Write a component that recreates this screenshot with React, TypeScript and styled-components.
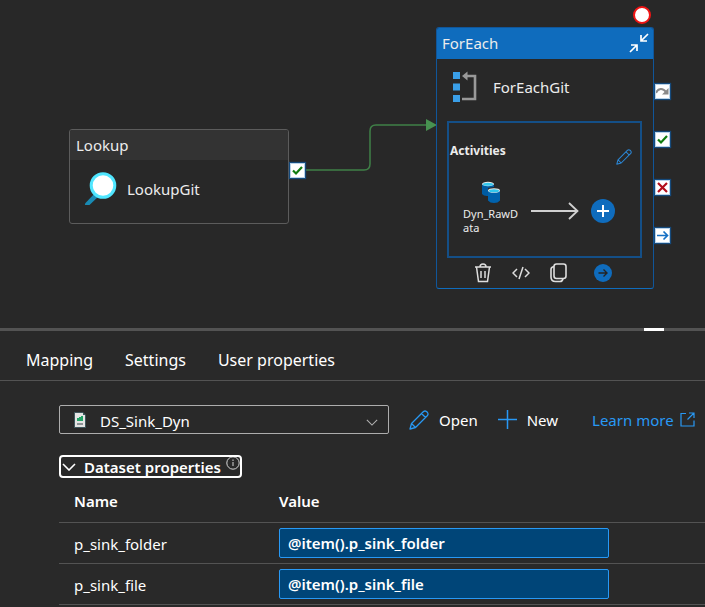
import React from "react";
import styled, { createGlobalStyle } from "styled-components";

const GlobalStyle = createGlobalStyle`
  *, *::before, *::after { box-sizing: border-box; }
  body {
    margin: 0;
    background: #292929;
    color: #ffffff;
    font-family: "Noto Sans", "Open Sans", sans-serif;
    font-size: 15px;
    line-height: 20px;
    overflow-x: hidden;
  }
  button, input, select { font: inherit; color: inherit; }
  svg { display: block; flex: none; }
`;

const IconButton = styled.button`
  display: flex;
  align-items: center;
  justify-content: center;
  padding: 0;
  border: 0;
  background: none;
  cursor: pointer;
`;

/* ---------- pipeline canvas ---------- */

const Canvas = styled.section`
  position: relative;
  height: 328px;
  background: #282828;
`;

const Wire = styled.svg`
  position: absolute;
  left: 304px;
  top: 116px;
`;

const Breakpoint = styled.button`
  position: absolute;
  left: 633px;
  top: 6px;
  width: 18px;
  height: 18px;
  padding: 0;
  border: 2px solid #f01414;
  border-radius: 50%;
  background: #ffffff;
`;

const Node = styled.article<{ $x: number; $y: number; $w: number; $active?: boolean }>`
  position: absolute;
  left: ${(p) => p.$x}px;
  top: ${(p) => p.$y}px;
  width: ${(p) => p.$w}px;
  border: 1px solid ${(p) => (p.$active ? "#10569a" : "#5c5c5c")};
  border-bottom-color: ${(p) => (p.$active ? "#0f6cbd" : "#5c5c5c")};
  border-radius: 3px;
  color: #ececec;
`;

const NodeHeader = styled.header<{ $active?: boolean }>`
  display: flex;
  align-items: center;
  justify-content: space-between;
  height: ${(p) => (p.$active ? 31 : 30)}px;
  padding: 0 4px ${(p) => (p.$active ? 2 : 0)}px ${(p) => (p.$active ? 5 : 6)}px;
  background: ${(p) => (p.$active ? "#0f6cbd" : "#333333")};
  border-radius: 2px 2px 0 0;
`;

const NodeTitle = styled.div<{ $compact?: boolean }>`
  display: flex;
  align-items: center;
  gap: 9px;
  height: ${(p) => (p.$compact ? 62 : 63)}px;
  padding-left: ${(p) => (p.$compact ? 15 : 14)}px;
  padding-bottom: 6px;
`;

const Ports = styled.div<{ $x: number; $y: number }>`
  position: absolute;
  left: ${(p) => p.$x}px;
  top: ${(p) => p.$y}px;
  display: flex;
  flex-direction: column;
  gap: 33px;
`;

const Port = styled(IconButton)`
  width: 15px;
  height: 15px;
  background: #ffffff;
  border: 1px solid #b9d3ea;
  box-shadow: 0 0 1px 1px #154a7c;
`;

const Activities = styled.section`
  height: 137px;
  margin: 0 11px 0 10px;
  border: 2px solid #144f87;
  padding: 18px 8px 0 1px;
`;

const ActivitiesHead = styled.div`
  display: flex;
  align-items: flex-start;
  justify-content: space-between;
  height: 24px;
`;

const ActivitiesTitle = styled.h2`
  margin: 0;
  font-size: 12px;
  line-height: 20px;
  font-weight: 700;
`;

const EditButton = styled(IconButton)`
  align-self: flex-end;
`;

const Flow = styled.div`
  display: grid;
  grid-template-columns: 56px 48px 24px;
  column-gap: 12px;
  align-items: start;
  padding: 16px 0 0 13px;
`;

const Activity = styled.div`
  display: flex;
  flex-direction: column;
  gap: 4px;
  font-size: 11px;
  line-height: 14px;

  svg { margin-left: 18px; }
`;

const FlowStep = styled.div`
  display: flex;
  align-items: center;
  height: 24px;
  margin-top: 18px;
`;

const AddButton = styled(IconButton)`
  width: 24px;
  height: 24px;
  border-radius: 50%;
  background: #0f6cbd;
`;

const NodeActions = styled.footer`
  display: grid;
  grid-template-columns: 24px 24px 24px 32px;
  column-gap: 14px;
  justify-content: center;
  align-items: center;
  height: 30px;
  padding-right: 3px;
`;

const RunButton = styled(IconButton)`
  justify-content: flex-end;
  padding-right: 5px;
`;

/* ---------- details panel ---------- */

const Splitter = styled.div`
  display: flex;
  justify-content: flex-end;
  height: 3px;
  padding-right: 41px;
  background: #535353;
`;

const SplitterHandle = styled.span`
  width: 20px;
  background: #ffffff;
`;

const TabBar = styled.nav`
  display: flex;
  gap: 32px;
  height: 50px;
  padding: 8px 26px 0;
  border-bottom: 1px solid #535353;
`;

const Tab = styled.button`
  padding: 0;
  border: 0;
  background: none;
  font-size: 16px;
  line-height: 24px;
  cursor: pointer;
`;

const Panel = styled.section`
  padding: 24px 0 0 59px;
`;

const DatasetRow = styled.div`
  display: flex;
  align-items: center;
  height: 29px;
`;

const SelectBox = styled.div`
  position: relative;
  width: 330px;
`;

const DatasetSelect = styled.select`
  appearance: none;
  width: 100%;
  height: 29px;
  padding: 2px 40px 0 40px;
  border: 1px solid #adadad;
  border-radius: 2px;
  background: #292929;
`;

const SelectIcon = styled.span<{ $end?: boolean }>`
  position: absolute;
  top: ${(p) => (p.$end ? 14 : 7)}px;
  ${(p) => (p.$end ? "right: 11px;" : "left: 15px;")}
  pointer-events: none;
`;

const Command = styled(IconButton)`
  gap: 10px;
  height: 29px;
  margin-left: 20px;
  white-space: nowrap;
`;

const LearnMore = styled.a`
  display: flex;
  align-items: center;
  gap: 6px;
  margin-left: 34px;
  color: #2899f5;
  text-decoration: none;
  white-space: nowrap;
`;

const SectionToggle = styled.button`
  display: flex;
  align-items: center;
  height: 23px;
  margin-top: 21px;
  padding: 0 0 0 1px;
  border: 2px solid #ffffff;
  border-radius: 4px;
  background: none;
  font-weight: 600;
  cursor: pointer;

  svg + span { margin: 0 5px 0 8px; }
  svg:last-child { align-self: flex-start; }
`;

const ParamTable = styled.table`
  width: 100%;
  margin-top: 3px;
  border-collapse: collapse;
  table-layout: fixed;

  tr { border-bottom: 1px solid #535353; }
  th:first-child { width: 220px; }
`;

const HeadCell = styled.th`
  height: 41px;
  padding: 0;
  text-align: left;
  font-weight: 600;

  &:first-child { padding-left: 15px; }
`;

const NameCell = styled.td`
  height: 41px;
  padding: 2px 0 0 15px;
`;

const ValueCell = styled.td`
  padding: 0;
`;

const ExpressionInput = styled.input`
  display: block;
  width: 330px;
  height: 30px;
  padding: 1px 8px 0;
  border: 1px solid #2899f5;
  border-radius: 2px;
  background: #004578;
  font-weight: 600;
`;

/* ---------- icons ---------- */

const Magnifier = () => (
  <svg width="34" height="34" viewBox="0 0 34 34">
    <path d="M12 20L1.500 31Q0 33 2 33H5.500L16 23Z" fill="#198ab3" />
    <circle cx="19" cy="13.500" r="11.800" fill="#fff" stroke="#50e6ff" strokeWidth="3" />
  </svg>
);

const Collapse = () => (
  <svg width="20" height="20" viewBox="0 0 20 20" fill="none" stroke="#fff" strokeWidth="1.700">
    <path d="M19 1L12.500 7.500M12 2V8H18M1 19L7.500 12.500M2 12H8V18" />
  </svg>
);

const LoopIcon = () => (
  <svg width="32" height="32" viewBox="0 0 32 32">
    <path d="M1 1h7v7H1zM1 12.500h7v7H1zM1 24h7v7H1z" fill="#3a9fe8" />
    <path d="M15 5H23V28H10" fill="none" stroke="#999" strokeWidth="2.600" />
    <path d="M10 5L15.500 .5V9.500Z" fill="#999" />
  </svg>
);

const Check = () => (
  <svg width="13" height="13" viewBox="0 0 13 13" fill="none" stroke="#107c10" strokeWidth="2.200">
    <path d="M2 6.500L5 9.500L11 3" />
  </svg>
);

const Skip = () => (
  <svg width="13" height="13" viewBox="0 0 13 13" fill="none" stroke="#8a8a8a" strokeWidth="2">
    <path d="M0 8C2 3 7 2.500 10 7" />
    <path d="M12.500 3V9.500H6Z" fill="#8a8a8a" stroke="none" />
  </svg>
);

const Cross = () => (
  <svg width="13" height="13" viewBox="0 0 13 13" fill="none" stroke="#b10e1c" strokeWidth="2.200">
    <path d="M2 2L11 11M11 2L2 11" />
  </svg>
);

const ArrowRight = ({ size, color }: { size: number; color: string }) => (
  <svg width={size} height={size} viewBox="0 0 13 13" fill="none" stroke={color} strokeWidth="1.700">
    <path d="M1 6.500H11.500M7.500 2.500L11.500 6.500L7.500 10.500" />
  </svg>
);

const Pencil = ({ size, color }: { size: number; color: string }) => (
  <svg width={size} height={size} viewBox="0 0 20 20" fill="none" stroke={color} strokeWidth="1.300" strokeLinejoin="round">
    <path d="M1 19L2.500 13.500L14.500 1.500Q16 .5 17.500 1.500L18.500 2.500Q19.500 4 18.500 5.500L6.500 17.500ZM12.500 3.500L16.500 7.500M2.500 13.500L6.500 17.500" />
  </svg>
);

const Databases = () => (
  <svg width="20" height="22" viewBox="0 0 20 22">
    <path d="M1 3V13Q3 15.500 7 15V7L13 6V3Z" fill="#005ba1" />
    <ellipse cx="7" cy="3" rx="6" ry="2.200" fill="#e8e8e8" />
    <ellipse cx="7" cy="3.300" rx="5" ry="1.500" fill="#32c8ee" />
    <path d="M7 10V19.500Q9 22 13 22T19 19.500V10Z" fill="#0062ad" />
    <ellipse cx="13" cy="9.500" rx="6" ry="2.300" fill="#e8e8e8" />
    <ellipse cx="13" cy="9.800" rx="5" ry="1.500" fill="#32c8ee" />
  </svg>
);

const LongArrow = () => (
  <svg width="48" height="18" viewBox="0 0 48 18" fill="none" stroke="#d0d0d0" strokeWidth="1.800">
    <path d="M0 9H46M38 1L46.500 9L38 17" />
  </svg>
);

const Plus = ({ size, color, weight }: { size: number; color: string; weight: number }) => (
  <svg width={size} height={size} viewBox={`0 0 ${size} ${size}`} fill="none" stroke={color} strokeWidth={weight}>
    <path d={`M0 ${size / 2}H${size}M${size / 2} 0V${size}`} />
  </svg>
);

const Trash = () => (
  <svg width="18" height="20" viewBox="0 0 18 20" fill="none" stroke="#dedede" strokeWidth="1.500">
    <path d="M1 4H17M6 4Q6 1 9 1T12 4M2.500 4L4.500 18.500H13.500L15.500 4M7 8V15M11 8V15" />
  </svg>
);

const Code = () => (
  <svg width="18" height="14" viewBox="0 0 18 14" fill="none" stroke="#dedede" strokeWidth="1.500">
    <path d="M5 3L1 7L5 11M13 3L17 7L13 11M11 1L7 13" />
  </svg>
);

const Copy = () => (
  <svg width="17" height="20" viewBox="0 0 17 20" fill="none" stroke="#dedede" strokeWidth="1.600">
    <rect x="4" y="1" width="12" height="14.500" rx="2.500" />
    <path d="M4 3.500Q1 4 1 6.500V14Q1 18.500 5.500 18.500H10Q12.500 18.500 13 15.500" />
  </svg>
);

const Run = () => (
  <svg width="18" height="18" viewBox="0 0 18 18">
    <circle cx="9" cy="9" r="9" fill="#0f6cbd" />
    <path d="M4.500 9H13M9.500 5.500L13 9L9.500 12.500" fill="none" stroke="#242424" strokeWidth="1.400" />
  </svg>
);

const CsvFile = () => (
  <svg width="12" height="16" viewBox="0 0 12 16">
    <path d="M0 0H9L12 3V16H0Z" fill="#3f565c" />
    <path d="M1 1H9V3H11V15H1Z" fill="#e4e4e4" />
    <path d="M3 9V6H5V5H7V4H9V9Z" fill="#21a366" />
    <path d="M3 11H9V13H3Z" fill="#8d9296" />
  </svg>
);

const Chevron = ({ width, color, weight }: { width: number; color: string; weight: number }) => (
  <svg width={width} height={(width + 2) / 2} viewBox="0 0 14 8" fill="none" stroke={color} strokeWidth={weight}>
    <path d="M1 1L7 7L13 1" />
  </svg>
);

const Info = () => (
  <svg width="14" height="14" viewBox="0 0 14 14" fill="none" stroke="#d6d6d6" strokeWidth="1">
    <circle cx="7" cy="6" r="6.200" />
    <path d="M7 5V9M7 2.500V4" />
  </svg>
);

const OpenExternal = () => (
  <svg width="15" height="15" viewBox="0 0 15 15" fill="none" stroke="#2899f5" strokeWidth="1.200">
    <path d="M6 1.500H1V14H14V8.500M9 1H14V6M14 1L7.500 7.500" />
  </svg>
);

const parameters = [
  { name: "p_sink_folder", value: "@item().p_sink_folder" },
  { name: "p_sink_file", value: "@item().p_sink_file" },
];

export default function App() {
  return (
    <main>
      <GlobalStyle />
      <Canvas aria-label="Pipeline canvas">
        <Wire width="134" height="60" viewBox="0 0 134 60">
          <path d="M0 54H60Q66 54 66 48V15Q66 9 72 9H124" fill="none" stroke="#3f8047" strokeWidth="1.500" />
          <path d="M122 3L133 9L122 15Z" fill="#479150" />
        </Wire>

        <Node $x={69} $y={129} $w={220}>
          <NodeHeader>Lookup</NodeHeader>
          <NodeTitle>
            <Magnifier />
            <span>LookupGit</span>
          </NodeTitle>
        </Node>
        <Ports $x={290} $y={163}>
          <Port aria-label="On success"><Check /></Port>
        </Ports>

        <Breakpoint aria-label="Breakpoint" />
        <Node $x={436} $y={27} $w={218} $active>
          <NodeHeader $active>
            <span>ForEach</span>
            <IconButton aria-label="Collapse"><Collapse /></IconButton>
          </NodeHeader>
          <NodeTitle $compact>
            <LoopIcon />
            <span>ForEachGit</span>
          </NodeTitle>
          <Activities>
            <ActivitiesHead>
              <ActivitiesTitle>Activities</ActivitiesTitle>
              <EditButton aria-label="Edit activities"><Pencil size={16} color="#2b88d8" /></EditButton>
            </ActivitiesHead>
            <Flow>
              <Activity>
                <Databases />
                <span>Dyn_RawD<br />ata</span>
              </Activity>
              <FlowStep><LongArrow /></FlowStep>
              <FlowStep>
                <AddButton aria-label="Add activity"><Plus size={12} color="#fff" weight={2} /></AddButton>
              </FlowStep>
            </Flow>
          </Activities>
          <NodeActions>
            <IconButton aria-label="Delete"><Trash /></IconButton>
            <IconButton aria-label="View code"><Code /></IconButton>
            <IconButton aria-label="Copy"><Copy /></IconButton>
            <RunButton aria-label="Run"><Run /></RunButton>
          </NodeActions>
        </Node>
        <Ports $x={655} $y={84}>
          <Port aria-label="On skip"><Skip /></Port>
          <Port aria-label="On success"><Check /></Port>
          <Port aria-label="On fail"><Cross /></Port>
          <Port aria-label="On completion"><ArrowRight size={13} color="#1570c4" /></Port>
        </Ports>
      </Canvas>

      <Splitter><SplitterHandle /></Splitter>

      <TabBar>
        <Tab>Mapping</Tab>
        <Tab>Settings</Tab>
        <Tab>User properties</Tab>
      </TabBar>

      <Panel>
        <DatasetRow>
          <SelectBox>
            <DatasetSelect aria-label="Sink dataset" defaultValue="DS_Sink_Dyn">
              <option>DS_Sink_Dyn</option>
            </DatasetSelect>
            <SelectIcon><CsvFile /></SelectIcon>
            <SelectIcon $end><Chevron width={12} color="#b0b0b0" weight={1.3} /></SelectIcon>
          </SelectBox>
          <Command><Pencil size={20} color="#2899f5" />Open</Command>
          <Command><Plus size={19} color="#2899f5" weight={1.5} />New</Command>
          <LearnMore href="#">Learn more<OpenExternal /></LearnMore>
        </DatasetRow>

        <SectionToggle aria-expanded="true">
          <Chevron width={14} color="#fff" weight={1.6} />
          <span>Dataset properties</span>
          <Info />
        </SectionToggle>

        <ParamTable>
          <thead>
            <tr>
              <HeadCell>Name</HeadCell>
              <HeadCell>Value</HeadCell>
            </tr>
          </thead>
          <tbody>
            {parameters.map((p) => (
              <tr key={p.name}>
                <NameCell><label htmlFor={p.name}>{p.name}</label></NameCell>
                <ValueCell><ExpressionInput id={p.name} defaultValue={p.value} /></ValueCell>
              </tr>
            ))}
          </tbody>
        </ParamTable>
      </Panel>
    </main>
  );
}
